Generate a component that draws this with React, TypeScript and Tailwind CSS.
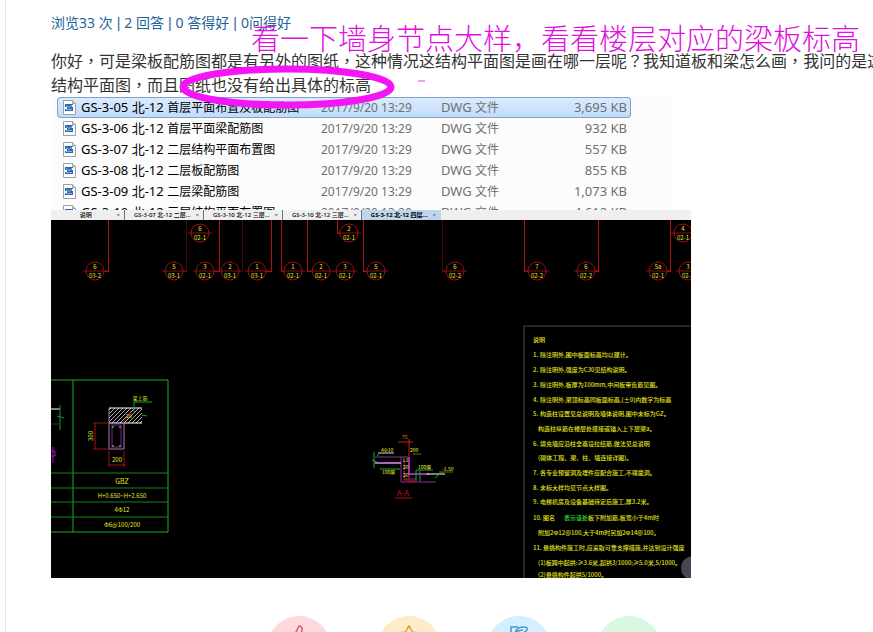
import { Star, ThumbsUp, MessageCircle } from "lucide-react"

const files = [
  { code: "GS-3-05 北-12", name: "首层平面布置及板配筋图", date: "2017/9/20 13:29", size: "3,695 KB" },
  { code: "GS-3-06 北-12", name: "首层平面梁配筋图", date: "2017/9/20 13:29", size: "932 KB" },
  { code: "GS-3-07 北-12", name: "二层结构平面布置图", date: "2017/9/20 13:29", size: "557 KB" },
  { code: "GS-3-08 北-12", name: "二层板配筋图", date: "2017/9/20 13:29", size: "855 KB" },
  { code: "GS-3-09 北-12", name: "二层梁配筋图", date: "2017/9/20 13:29", size: "1,073 KB" },
  { code: "GS-3-10 北-12", name: "三层结构平面布置图", date: "2017/9/20 13:29", size: "4,612 KB" },
]

const stats = ["浏览33 次", "2 回答", "0 答得好", "0问得好"]

const tabs = [
  { label: "说明", active: false },
  { label: "GS-3-07 北-12 二层…", active: false },
  { label: "GS-3-10 北-12 三层…", active: false },
  { label: "GS-3-10 北-12 三层…", active: false },
  { label: "GS-3-12 北-12 四层…", active: true },
]

const bubbles = [
  { x: 149, y: 13, top: "6", bottom: "02-1" },
  { x: 298, y: 13, top: "2", bottom: "02-1" },
  { x: 632, y: 13, top: "4", bottom: "02-1" },
  { x: 44, y: 51, top: "6", bottom: "03-2" },
  { x: 123, y: 51, top: "5", bottom: "03-1" },
  { x: 154, y: 51, top: "3", bottom: "02-1" },
  { x: 179, y: 51, top: "2", bottom: "03-1" },
  { x: 206, y: 51, top: "1", bottom: "03-1" },
  { x: 242, y: 51, top: "1", bottom: "02-1" },
  { x: 270, y: 51, top: "2", bottom: "02-1" },
  { x: 294, y: 51, top: "3", bottom: "02-1" },
  { x: 325, y: 51, top: "5", bottom: "02-1" },
  { x: 404, y: 51, top: "6", bottom: "02-2" },
  { x: 486, y: 51, top: "7", bottom: "02-2" },
  { x: 535, y: 51, top: "6", bottom: "02-2" },
  { x: 607, y: 51, top: "5a", bottom: "02-1" },
  { x: 637, y: 51, top: "3", bottom: "02-1" },
]

const axes = [
  { d: "M57 0V51H53", dim: false },
  { d: "M135 0V51H132", dim: true },
  { d: "M168 0V51H163", dim: false },
  { d: "M191 0V51", dim: true },
  { d: "M220 0V51H215", dim: false },
  { d: "M230 0V51H233", dim: false },
  { d: "M256 0V51H261", dim: false },
  { d: "M286 0V13H289", dim: false },
  { d: "M312 0V51H316", dim: false },
  { d: "M391 0V51H395", dim: true },
  { d: "M473 0V51H477", dim: false },
  { d: "M547 0V51H544", dim: false },
  { d: "M619 0V51H616", dim: false },
]

const notes = [
  { y: 137, no: "1.", text: "除注明外,图中板面标高均以建计。" },
  { y: 152, no: "2.", text: "除注明外,强度为C30见结构说明。" },
  { y: 167, no: "3.", text: "除注明外,板厚为100mm,中间板带负筋见图。" },
  { y: 182, no: "4.", text: "除注明外,梁顶标高同板面标高,(±0)内数字为标高" },
  { y: 196, no: "5.", text: "构造柱设置见总说明及墙体说明,图中未标为GZ。" },
  { y: 211, no: "", text: "构造柱纵筋在楼层处搭接或锚入上下层梁a。" },
  { y: 226, no: "6.", text: "填充墙应沿柱全高设拉结筋,做法见总说明" },
  { y: 240, no: "", text: "(砌体工程、梁、柱、墙连接详图)。" },
  { y: 255, no: "7.", text: "各专业预留洞及埋件应配合施工,不得凿洞。" },
  { y: 270, no: "8.", text: "未标大样均见节点大样图。" },
  { y: 284, no: "9.", text: "电梯机房及设备基础待定后施工,厚3.2米。" },
  { y: 300, no: "10.", text: "图名" },
  { y: 315, no: "", text: "附加2Φ12@100,大于4m时另加2Φ14@100。" },
  { y: 330, no: "11.", text: "悬挑构件施工时,应采取可靠支撑措施,并达到设计强度" },
  { y: 345, no: "", text: "(1)板跨中起拱:≥3.6米,起拱3/1000;≥5.0米,5/1000。" },
  { y: 357, no: "", text: "(2)悬挑构件起拱5/1000。" },
]

const actions = [
  { label: "点赞", icon: ThumbsUp, style: "bg-[#fdd8de] text-[#dc5574] pt-2" },
  { label: "收藏", icon: Star, style: "bg-[#feebc8] text-[#dca43c] pt-2" },
  { label: "回答", icon: AnswerIcon, style: "bg-[#d4efff] text-[#4a96d2] pt-2" },
  { label: "评论", icon: MessageCircle, style: "bg-[#daf8e0] text-[#5cb874] pt-5" },
]

function AnswerIcon({ className }: { className?: string }) {
  return (
    <svg viewBox="0 0 24 24" className={className} fill="none" stroke="currentColor" strokeWidth="1.5" aria-hidden="true">
      <path d="M11 3H4v18h16v-8" />
      <path d="M8 9C9 5 13 3 17 3c4 0 4 2 2 4-2 2-5 3-9 3M9 8c2-1 4-2 7-2" />
    </svg>
  )
}

function DwgIcon() {
  return (
    <svg viewBox="0 0 13 15" className="h-[15px] w-[13px] shrink-0" aria-hidden="true">
      <path d="M.5.5h9l3 3v11H.5z" fill="#fdfdfd" stroke="#9aa3aa" />
      <path d="M9.5.5v3h3" fill="#d9e0b4" stroke="#9aa3aa" />
      <path d="M2 4h8v1H9v2h1v4H2V9h2V7H2z" fill="#2a68b0" />
      <path d="M3 5.5l3 2 3-2M3 9.5h6" fill="none" stroke="#b8d8f5" strokeWidth=".7" />
    </svg>
  )
}

function FileList() {
  return (
    <div className="h-[113px] w-[621px] max-w-full overflow-hidden bg-[#fcfcfc] pl-1.5">
      <table className="w-[574px] table-fixed border-separate border-spacing-0 text-xs text-[#707070]">
        <colgroup>
          <col className="w-[264px]" />
          <col className="w-[120px]" />
          <col className="w-[120px]" />
          <col />
        </colgroup>
        <tbody>
          {files.map((file, i) => {
            const cell =
              i === 0
                ? "border-y border-[#7da2ce] bg-linear-to-b from-[#dcebfc] to-[#c1dbfc]"
                : "border-y border-transparent"
            return (
              <tr key={file.code} className="h-[21px]">
                <td className={`${cell} rounded-l-sm border-l p-0 pl-[5px]`}>
                  <div className="flex h-[19px] items-center gap-[5px] whitespace-nowrap text-black">
                    <DwgIcon />
                    <span className="leading-[19px]">
                      <span className="text-[13px]">{file.code} </span>
                      {file.name}
                    </span>
                  </div>
                </td>
                <td className={`${cell} p-0 leading-[19px]`}>{file.date}</td>
                <td className={`${cell} p-0 leading-[19px]`}>
                  <span className="text-[13px]">DWG</span> 文件
                </td>
                <td className={`${cell} rounded-r-sm border-r p-0 pr-[3px] text-right text-[13px] leading-[19px] whitespace-nowrap`}>
                  {file.size}
                </td>
              </tr>
            )
          })}
        </tbody>
      </table>
    </div>
  )
}

function SectionTable() {
  return (
    <g fill="none">
      <path d="M0 160H117V312H0M22 160V312" stroke="#15b515" />
      <path d="M0 253H117M0 268H117M0 282H117M0 297H117" stroke="#128612" />

      {/* Neighbouring section, cut off by the view */}
      <path d="M0 189H9" stroke="#fff" />
      <path d="M9 185V210M6 196L13 198" stroke="#159a35" />
      <path d="M0 204H9" stroke="#333" />
      <path d="M2 227V243M0 231H4V236H0" stroke="#a80fb8" />

      {/* Slab and beam */}
      <rect x="58" y="188" width="33" height="15" fill="url(#hatch)" />
      <path d="M58 188H91M58 203H91" stroke="#fff" />
      <path d="M58 188V229H73V203" stroke="#b07ac0" />
      <rect x="61" y="205" width="9" height="22" stroke="#7a2a96" />
      <path d="M61 207h2M68 207h2M61 226h2M68 226h2" stroke="#55ff77" />
      <path d="M42 203H58M42 229H58M44 203V229M58 231V247M73 231V247M57 245H75" stroke="#a01010" />
      <path d="M101 182H83V192M91 195L96 196" stroke="#1aa51a" />
      <path d="M72 203L80 191" stroke="#a01010" />
      <g fill="#e6e620" fontSize="6" textAnchor="middle">
        <text x="89" y="180" fontSize="5">梁上筋</text>
        <text x="78" y="198" fontSize="5">20</text>
        <text transform="translate(42 216) rotate(-90)">300</text>
        <text x="66" y="242">200</text>
        <text x="71" y="264" fontSize="7">GBZ</text>
        <text x="71" y="278">H+0.650~H+2.650</text>
        <text x="71" y="292">4Φ12</text>
        <text x="71" y="307">Φ6@100/200</text>
      </g>
    </g>
  )
}

function WallDetail() {
  return (
    <g fill="none">
      <path d="M324 237H358M350 237V262H385" stroke="#8f2fa5" />
      <path d="M324 243H350" stroke="#e58bf0" strokeWidth="1.5" />
      <path d="M358 237V254H378" stroke="#d23be0" strokeWidth="1.5" />
      <path d="M376 254H394" stroke="#fff" />
      <path d="M353 240V259H365" stroke="#7b2290" />
      <path d="M327 233H343" stroke="#ddd" />
      <path d="M323 232V248M321 240L326 242M329 249H349M365 261V250H382M369 250V261M326 236L330 232M384 258L391 252" stroke="#1aa535" />
      <path d="M362 234H370M388 252H402" stroke="#5b6b22" />
      <path d="M347 222H362M358 219V236M358 255V261H364M352 260H357" stroke="#d01818" />
      <path d="M344 278H361" stroke="#b01010" />
      <g fill="#f0f020" fontSize="5">
        <text x="330" y="232">4Φ10</text>
        <text x="359" y="232">200</text>
        <text x="331" y="254">100厚</text>
        <text x="367" y="249">100厚</text>
        <text x="391" y="251">-1.50</text>
        <text x="352" y="242">L1</text>
        <text x="352" y="249">20</text>
        <text x="352" y="257">20</text>
        <text x="351" y="219" fill="#e08030">75</text>
      </g>
      <text x="352" y="276" fill="#c01515" fontSize="8" textAnchor="middle">A-A</text>
    </g>
  )
}

function Drawing() {
  return (
    <svg
      viewBox="0 0 640 358"
      className="block w-full bg-black font-['Noto_Sans_CJK_SC',sans-serif]"
      role="img"
      aria-label="CAD 图纸"
    >
      <defs>
        <pattern id="hatch" width="4" height="4" patternUnits="userSpaceOnUse">
          <path d="M-1 5L5 -1M-1 1L1 -1M3 5L5 3" stroke="#ddd" strokeWidth=".8" />
        </pattern>
      </defs>

      {/* Axis lines and bubbles */}
      <g fill="none" shapeRendering="crispEdges">
        {axes.map((axis) => (
          <path key={axis.d} d={axis.d} stroke={axis.dim ? "#4a0808" : "#b01212"} />
        ))}
      </g>
      {bubbles.map((b) => (
        <g key={`${b.x}-${b.y}`} textAnchor="middle" fill="#e6e620" fontSize="6">
          <circle cx={b.x} cy={b.y} r="9" fill="none" stroke="#a01010" />
          <path d={`M${b.x - 12} ${b.y}h24`} stroke="#8a1010" />
          <text x={b.x} y={b.y - 2}>{b.top}</text>
          <text x={b.x} y={b.y + 7}>{b.bottom}</text>
        </g>
      ))}

      <SectionTable />
      <WallDetail />

      {/* General notes */}
      <path d="M473 358V106H640" fill="none" stroke="#4a4a4a" />
      <g fill="#e2e21c" fontSize="6" fontWeight="500">
        <text x="482" y="122">说明</text>
        {notes.map((note) => (
          <g key={note.y}>
            {note.no && <text x="482" y={note.y}>{note.no}</text>}
            <text x={note.no.length === 3 ? 492 : note.no ? 489 : 487} y={note.y}>{note.text}</text>
          </g>
        ))}
        <text x="513" y="300">
          <tspan fill="#30e030">表示该处</tspan>板下附加筋,板宽小于4m时
        </text>
      </g>
      <circle cx="642" cy="348" r="12" fill="#77738a" opacity=".6" />
    </svg>
  )
}

function CadViewer() {
  return (
    <div className="w-[640px] max-w-full">
      <div className="flex h-2.5 bg-[#efefef] text-[6px] leading-[8px] text-black">
        {tabs.map((tab, i) => (
          <button
            key={i}
            type="button"
            className={`flex h-2.5 items-center border-r border-gray-500 px-1 whitespace-nowrap ${
              i === 0 ? "w-[74px]" : "w-[79px]"
            } ${tab.active ? "border-transparent bg-[#bfd5ec] font-bold" : "font-medium"}`}
          >
            <span className="flex-1 text-center">{tab.label}</span>
            <span className="font-normal text-gray-600">×</span>
          </button>
        ))}
      </div>
      <Drawing />
    </div>
  )
}

// Hand-drawn marks laid over the question
function Markup() {
  return (
    <>
      <p className="absolute top-[20px] left-[245px] text-[29px] leading-[38px] font-light whitespace-nowrap text-[#e010e0]">
        看一下墙身节点大样，看看楼层对应的梁板标高
      </p>
      <svg
        viewBox="0 0 250 50"
        className="pointer-events-none absolute top-[62px] left-[170px] h-[50px] w-[250px]"
        aria-hidden="true"
      >
        <ellipse cx="111" cy="25" rx="104" ry="18" fill="none" stroke="#f514f5" strokeWidth="7" />
        <path d="M242 19h7" stroke="#e040e0" />
      </svg>
    </>
  )
}

// Punctuation that sits in the middle of its cell
function Mark({ children }: { children: string }) {
  return <span lang="zh-TW" className="font-['Noto_Sans_CJK_TC',sans-serif] leading-none">{children}</span>
}

export default function App() {
  return (
    <div className="h-screen overflow-hidden bg-white pl-[5px] font-['Noto_Sans','Noto_Sans_CJK_SC',sans-serif]">
      <main className="relative h-full border-l border-[#e3e3e3] pt-[13px] pl-[45px]">
        <div className="flex text-sm leading-5 whitespace-nowrap text-[#1f6396]">
          {stats.map((stat, i) => (
            <span key={stat}>
              {i > 0 && <span className="mx-1 font-['Liberation_Sans',sans-serif]">|</span>}
              {stat}
            </span>
          ))}
        </div>
        <p className="mt-4 text-base leading-6 whitespace-nowrap text-[#333]">
          你好<Mark>，</Mark>可是梁板配筋图都是有另外的图纸<Mark>，</Mark>这种情况这结构平面图是画在哪一层呢
          <Mark>？</Mark>我知道板和梁怎么画<Mark>，</Mark>我问的是这
          <br />
          结构平面图<Mark>，</Mark>而且图纸也没有给出具体的标高
        </p>

        <FileList />
        <CadViewer />
        <Markup />

        {/* Actions */}
        <div className="mt-[38px] flex justify-center gap-[46px] pl-1">
          {actions.map((action) => {
            const Icon = action.icon
            return (
              <button
                key={action.label}
                type="button"
                aria-label={action.label}
                className={`flex h-16 w-16 shrink-0 justify-center rounded-full ${action.style}`}
              >
                <Icon className="h-6 w-6" strokeWidth={1.5} />
              </button>
            )
          })}
        </div>
      </main>
    </div>
  )
}
